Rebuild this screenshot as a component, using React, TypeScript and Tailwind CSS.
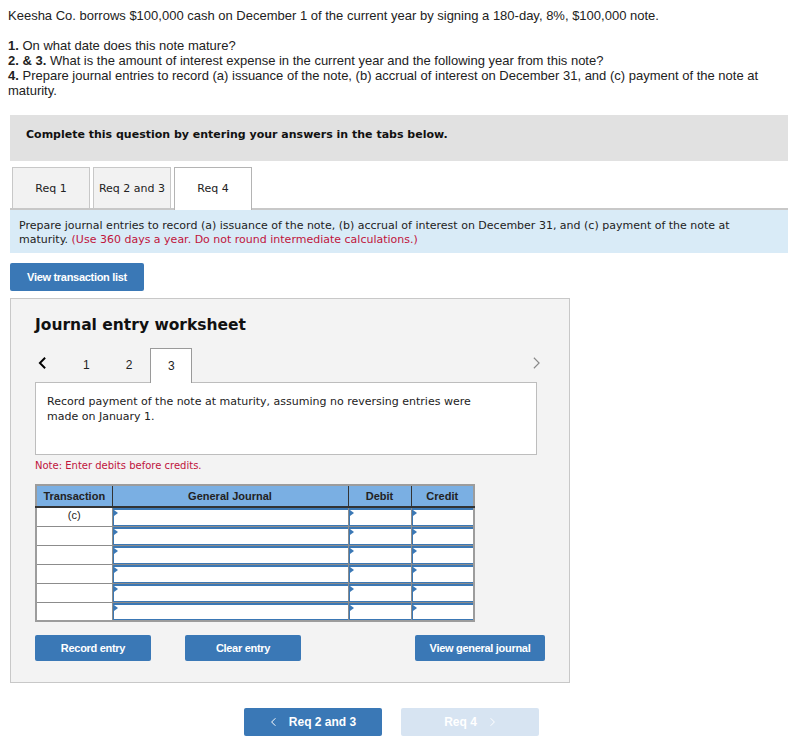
import React from "react";

const ROWS = ["(c)", "", "", "", "", ""];

function Chevron({ dir, className }: { dir: "left" | "right"; className?: string }) {
  return (
    <svg viewBox="0 0 10 16" className={className} fill="none" stroke="currentColor">
      {dir === "left" ? <polyline points="8,2 2,8 8,14" /> : <polyline points="2,2 8,8 2,14" />}
    </svg>
  );
}

function InputCell() {
  return (
    <td className="h-[19px] border border-[#8c8c8c] bg-white p-0">
      <div className="relative h-full w-full border-t-2 border-l border-b border-[#3b78b5]">
        <span className="absolute left-0 top-0 h-0 w-0 border-y-[3px] border-l-[4px] border-y-transparent border-l-[#3b78b5]" />
      </div>
    </td>
  );
}

export default function App() {
  return (
    <div className="min-h-[746px] w-[796px] bg-white font-['Liberation_Sans',Arial,sans-serif] text-[#222]">
      {/* question */}
      <div className="px-[8px] pt-[8px] text-[13px] leading-[15px]">
        <p>Keesha Co. borrows $100,000 cash on December 1 of the current year by signing a 180-day, 8%, $100,000 note.</p>
        <p className="mt-[15px]">
          <b>1.</b> On what date does this note mature?
        </p>
        <p>
          <b>2. &amp; 3.</b> What is the amount of interest expense in the current year and the following year from this note?
        </p>
        <p className="pr-[20px]">
          <b>4.</b> Prepare journal entries to record (a) issuance of the note, (b) accrual of interest on December 31, and (c) payment of the note at maturity.
        </p>
      </div>

      <div className="mx-[10px] mt-[17px] w-[778px] font-['DejaVu_Sans',Verdana,sans-serif]">
        <div className="h-[46px] bg-[#e1e1e1] pl-[16px] pt-[13px] text-[11px] font-bold leading-[14px] text-[#111]">
          Complete this question by entering your answers in the tabs below.
        </div>

        {/* tabs */}
        <div className="mt-[6px] flex gap-[3px] pl-[2px] text-[11px] leading-[14px]">
          <div className="flex h-[41px] w-[78px] items-center justify-center border border-b-0 border-[#c8c8c8] bg-[#f2f2f2] pt-[1px]">Req 1</div>
          <div className="flex h-[41px] w-[78px] items-center justify-center border border-b-0 border-[#c8c8c8] bg-[#f2f2f2] pt-[1px]">Req 2 and 3</div>
          <div className="relative z-10 -mb-[2px] flex h-[43px] w-[78px] items-center justify-center border border-b-0 border-[#b4b4b4] bg-white pb-[1px]">Req 4</div>
        </div>

        <div className="h-[45px] border-t-2 border-[#c8c8c8] bg-[#d9ebf7] pl-[9px] pr-[48px] pt-[9px] text-[11px] leading-[14px] text-[#222]">
          Prepare journal entries to record (a) issuance of the note, (b) accrual of interest on December 31, and (c) payment of the note at maturity.{" "}
          <span className="text-[#c0143c]">(Use 360 days a year. Do not round intermediate calculations.)</span>
        </div>

        <button className="mt-[10px] h-[28px] w-[134px] rounded-[2px] bg-[#3a78b6] font-['Liberation_Sans',Arial,sans-serif] text-[11px] font-bold tracking-[-0.3px] text-white">
          View transaction list
        </button>

        {/* worksheet */}
        <div className="mt-[7px] h-[385px] w-[560px] border border-[#c8c8c8] bg-[#f3f3f3] pl-[24px]">
          <h2 className="pt-[16px] text-[15.5px] font-bold leading-[20px] text-[#111]">Journal entry worksheet</h2>

          <div className="mt-[13px] flex h-[34px] w-[502px] items-center">
            <Chevron dir="left" className="ml-[3px] -mt-[4px] h-[14px] w-[9px] stroke-[2.2] text-black" />
            <span className="ml-[36px] font-['Liberation_Sans',Arial,sans-serif] text-[12px]">1</span>
            <span className="ml-[36px] font-['Liberation_Sans',Arial,sans-serif] text-[12px]">2</span>
            <div className="relative z-10 ml-[18px] flex h-[35px] w-[42px] items-center justify-center self-start border border-b-0 border-[#9a9a9a] bg-white font-['Liberation_Sans',Arial,sans-serif] text-[12px]">
              3
            </div>
            <Chevron dir="right" className="ml-auto mr-[-4px] -mt-[4px] h-[14px] w-[9px] stroke-[1.3] text-[#888]" />
          </div>

          <div className="h-[73px] w-[502px] border border-[#bdbdbd] bg-white pl-[11px] pt-[11px] text-[11px] leading-[15px] text-[#222]">
            Record payment of the note at maturity, assuming no reversing entries were
            <br />
            made on January 1.
          </div>

          <p className="mt-[4px] text-[10px] leading-[14px] text-[#c0143c]">Note: Enter debits before credits.</p>

          <table className="mt-[11px] w-[438px] table-fixed border-collapse border-2 border-[#9c9c9c] font-['Liberation_Sans',Arial,sans-serif]">
            <colgroup>
              <col className="w-[76px]" />
              <col className="w-[236px]" />
              <col className="w-[63px]" />
              <col className="w-[63px]" />
            </colgroup>
            <thead>
              <tr className="h-[22px] bg-[#7aafe3] text-[11px] font-bold text-[#222]">
                <th className="border-r border-b-2 border-[#333]">Transaction</th>
                <th className="border-r border-b-2 border-[#333]">General Journal</th>
                <th className="border-r border-b-2 border-[#333]">Debit</th>
                <th className="border-b-2 border-[#333]">Credit</th>
              </tr>
            </thead>
            <tbody>
              {ROWS.map((t, i) => (
                <tr key={i} className="h-[19px]">
                  <td className="border border-[#8c8c8c] bg-white pt-[1px] text-center align-top text-[11px] leading-[13px]">{t}</td>
                  <InputCell />
                  <InputCell />
                  <InputCell />
                </tr>
              ))}
            </tbody>
          </table>

          <div className="mt-[13px] flex font-['Liberation_Sans',Arial,sans-serif] text-[11px] font-bold tracking-[-0.3px] text-white">
            <button className="h-[26px] w-[116px] rounded-[2px] bg-[#3a78b6]">Record entry</button>
            <button className="ml-[34px] h-[26px] w-[116px] rounded-[2px] bg-[#3a78b6]">Clear entry</button>
            <button className="ml-[114px] h-[26px] w-[130px] rounded-[2px] bg-[#3a78b6]">View general journal</button>
          </div>
        </div>

        {/* bottom nav */}
        <div className="mt-[25px] flex gap-[19px] pl-[234px] font-['Liberation_Sans',Arial,sans-serif] text-[12px] font-bold text-white">
          <button className="flex h-[28px] w-[138px] items-center justify-center gap-[12px] rounded-[2px] bg-[#3a78b6]">
            <Chevron dir="left" className="h-[10px] w-[7px] stroke-[1.6]" />
            Req 2 and 3
          </button>
          <button className="flex h-[28px] w-[138px] items-center justify-center gap-[12px] rounded-[2px] bg-[#d7e4f2]">
            Req 4
            <Chevron dir="right" className="h-[10px] w-[7px] stroke-[1.6]" />
          </button>
        </div>
      </div>
    </div>
  );
}
